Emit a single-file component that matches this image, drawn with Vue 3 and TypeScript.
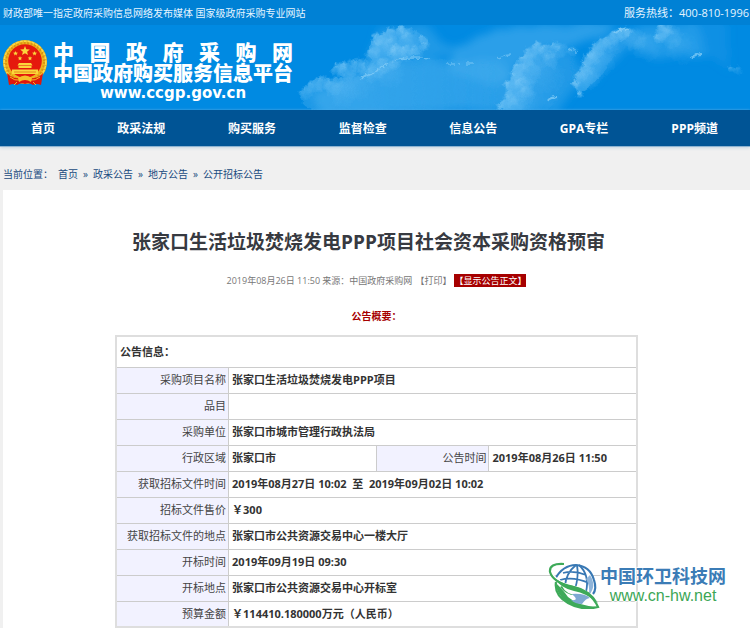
<script setup lang="ts">
interface Field {
  label: string
  value: string
}

interface Row {
  id: number
  fields: Field[]
}

// x, y, radius and opacity of one puff of cloud
type Puff = [number, number, number, number]

const siteName: string[] = ['中', '国', '政', '府', '采', '购', '网']
const navItems: string[] = ['首页', '政采法规', '购买服务', '监督检查', '信息公告', 'GPA专栏', 'PPP频道']
const crumbs: string[] = ['首页', '政采公告', '地方公告', '公开招标公告']

const puffs: Puff[] = [
  [9, 66, 7, 0.5], [17, 61, 8, 0.6], [26, 57, 8, 0.6], [36, 60, 10, 0.6], [46, 66, 15, 0.3],
  [42, 43, 8, 0.8], [50, 44, 10, 0.8], [61, 39, 8, 0.8], [70, 42, 9, 0.6], [80, 42, 10, 0.5],
  [76, 28, 8, 0.8], [80, 13, 7, 0.8], [88, 12, 8, 0.7], [95, 7, 7, 0.7], [84, 22, 12, 0.7],
  [96, 19, 11, 0.6], [106, 6, 7, 0.9], [112, 14, 10, 0.6], [100, 27, 10, 0.9], [110, 26, 9, 0.8],
  [119, 26, 8, 0.6], [126, 14, 5, 0.7], [128, 20, 5, 0.6], [87, 39, 9, 0.6], [97, 38, 7, 0.7],
  [75, 48, 9, 0.5], [60, 57, 18, 0.25], [92, 46, 16, 0.3],
  [206, 80, 7, 0.7], [214, 72, 9, 0.7], [212, 60, 7, 0.9], [220, 52, 9, 0.9], [226, 60, 12, 0.8],
  [222, 43, 7, 0.8], [229, 34, 8, 0.8], [232, 46, 13, 0.6], [229, 68, 10, 0.5], [233, 27, 7, 0.7],
  [241, 22, 7, 0.9], [249, 25, 9, 0.7], [258, 20, 6, 0.8], [264, 24, 8, 0.5], [254, 33, 9, 0.6],
  [240, 34, 11, 0.4], [275, 25, 6, 0.4], [220, 80, 12, 0.4], [250, 50, 18, 0.2],
  [279, 58, 5, 0.9], [283, 68, 4, 0.9], [283, 50, 7, 0.8], [290, 42, 8, 0.8], [294, 32, 8, 0.9],
  [300, 24, 8, 0.8], [306, 18, 8, 0.7], [313, 17, 9, 0.5], [319, 11, 8, 0.8], [326, 8, 7, 0.8],
  [331, 6, 6, 0.9], [337, 13, 12, 0.4], [302, 36, 16, 0.35], [292, 52, 12, 0.4],
  [362, 12, 6, 0.9], [367, 4, 9, 0.9], [374, 10, 12, 0.5], [350, 20, 15, 0.3], [385, 22, 16, 0.25],
  [434, 43, 4, 0.6], [441, 44, 5, 0.4],
]

const rows: Row[] = [
  { id: 1, fields: [{ label: '采购项目名称', value: '张家口生活垃圾焚烧发电PPP项目' }] },
  { id: 2, fields: [{ label: '品目', value: '' }] },
  { id: 3, fields: [{ label: '采购单位', value: '张家口市城市管理行政执法局' }] },
  {
    id: 4,
    fields: [
      { label: '行政区域', value: '张家口市' },
      { label: '公告时间', value: '2019年08月26日 11:50' },
    ],
  },
  { id: 5, fields: [{ label: '获取招标文件时间', value: '2019年08月27日 10:02  至  2019年09月02日 10:02' }] },
  { id: 6, fields: [{ label: '招标文件售价', value: '￥300' }] },
  { id: 7, fields: [{ label: '获取招标文件的地点', value: '张家口市公共资源交易中心一楼大厅' }] },
  { id: 8, fields: [{ label: '开标时间', value: '2019年09月19日 09:30' }] },
  { id: 9, fields: [{ label: '开标地点', value: '张家口市公共资源交易中心开标室' }] },
  { id: 10, fields: [{ label: '预算金额', value: '￥114410.180000万元（人民币）' }] },
]
</script>

<template>
  <div class="page">
    <header>
      <div class="topbar">
        <span>财政部唯一指定政府采购信息网络发布媒体 国家级政府采购专业网站</span>
        <span class="hotline">服务热线：400-810-1996</span>
      </div>

      <div class="banner">
        <svg class="emblem" viewBox="0 0 46 48" aria-hidden="true">
          <circle cx="23" cy="23" r="22" fill="#f0b41e" />
          <circle cx="23" cy="23" r="19.5" fill="none" stroke="#d99512" stroke-width="3" stroke-dasharray="2 1.6" />
          <circle cx="23" cy="23" r="20.8" fill="none" stroke="#fbd94a" stroke-width="1.5" stroke-dasharray="3 1" />
          <circle cx="23" cy="22" r="16.8" fill="#e5190d" />
          <g fill="#fbd63c">
            <path d="M23 7 l1.3 3.3 3.5.2 -2.7 2.2 .9 3.4 -3-1.9 -3 1.9 .9-3.4 -2.7-2.2 3.5-.2z" />
            <path d="M13.5 12 l.7 1.6 1.8.1 -1.4 1.2 .5 1.7 -1.6-1 -1.5 1 .5-1.7 -1.4-1.2 1.8-.1z" />
            <path d="M32.5 12 l.7 1.6 1.8.1 -1.4 1.2 .5 1.7 -1.6-1 -1.5 1 .5-1.7 -1.4-1.2 1.8-.1z" />
            <path d="M18 17 l.6 1.5 1.7.1 -1.3 1.1 .4 1.6 -1.4-.9 -1.4.9 .4-1.6 -1.3-1.1 1.7-.1z" />
            <path d="M28 17 l.6 1.5 1.7.1 -1.3 1.1 .4 1.6 -1.4-.9 -1.4.9 .4-1.6 -1.3-1.1 1.7-.1z" />
            <path d="M17 24h12l1.5 2.5h-15z" />
            <path d="M16.5 27h13v2h-13z" />
            <path d="M10 30.5h26v4.5H10z" />
          </g>
          <path d="M12 33h22" stroke="#e58a18" stroke-width="1" />
          <path d="M5 34 Q12 42 23 38 Q34 42 41 34 L39 46 Q34 44 31 46 Q27 43 23 45 Q19 43 15 46 Q12 44 7 46Z" fill="#e0170c" />
          <path d="M16 39 Q23 34 30 39 L29 43 Q23 39 17 43Z" fill="#f6c02a" />
          <path d="M8 38 Q13 42 17 41M29 41 Q33 42 38 38M12 46l3-3M34 46l-3-3" stroke="#f7ba22" stroke-width="1" fill="none" />
        </svg>

        <div class="brand">
          <div class="brand-name">
            <span v-for="ch in siteName" :key="ch">{{ ch }}</span>
          </div>
          <div class="brand-sub">中国政府购买服务信息平台</div>
          <div class="brand-url">www.ccgp.gov.cn</div>
        </div>

        <svg class="clouds" viewBox="0 0 454 85" preserveAspectRatio="xMinYMid slice" aria-hidden="true">
          <defs>
            <filter id="fray" x="-5%" y="-10%" width="110%" height="120%">
              <feTurbulence type="fractalNoise" baseFrequency="0.18" numOctaves="3" seed="7" result="n" />
              <feDisplacementMap in="SourceGraphic" in2="n" scale="7" xChannelSelector="R" yChannelSelector="G" />
              <feGaussianBlur stdDeviation="0.5" />
            </filter>
            <filter id="soft" x="-20%" y="-30%" width="140%" height="160%">
              <feTurbulence type="fractalNoise" baseFrequency="0.05" numOctaves="3" seed="3" result="n" />
              <feDisplacementMap in="SourceGraphic" in2="n" scale="12" xChannelSelector="R" yChannelSelector="G" />
              <feGaussianBlur stdDeviation="4" />
            </filter>
            <radialGradient id="puff" cx="0.55" cy="0.6" r="0.6" fx="0.3" fy="0.25">
              <stop offset="0" stop-color="#8fd2f9" stop-opacity="0.7" />
              <stop offset="0.5" stop-color="#6fc2f5" stop-opacity="0.45" />
              <stop offset="1" stop-color="#4cb0f0" stop-opacity="0.02" />
            </radialGradient>
            <linearGradient id="bank" x1="0" y1="0" x2="1" y2="0">
              <stop offset="0" stop-color="#4fb3f0" stop-opacity="0.6" />
              <stop offset="0.6" stop-color="#3fa9ec" stop-opacity="0.45" />
              <stop offset="1" stop-color="#3fa9ec" stop-opacity="0" />
            </linearGradient>
            <linearGradient id="tower" x1="0" y1="0" x2="1" y2="0">
              <stop offset="0" stop-color="#5ab9f3" stop-opacity="0.7" />
              <stop offset="1" stop-color="#1d94e6" stop-opacity="0.05" />
            </linearGradient>
          </defs>

          <g filter="url(#soft)">
            <path d="M12 72 L80 38 L205 36 L228 85 L30 90Z" fill="#4ab0ef" opacity="0.55" />
            <path d="M82 4 L130 0 L165 30 L130 36 L74 36Z" fill="#3ca8ec" opacity="0.5" />
            <path d="M160 24 L200 4 L320 -4 L304 14 L270 22 L235 26 L205 62 L150 44Z" fill="#42abec" opacity="0.65" />
            <path d="M230 26 L275 26 L290 50 L262 86 L212 86Z" fill="#3ca8ec" opacity="0.5" />
            <path d="M300 20 L330 4 L400 -4 L412 28 L360 32 L330 22 L296 56 L280 66Z" fill="#3ca8ec" opacity="0.55" />
            <path d="M395 -4 L430 -4 L436 44 L410 30Z" fill="#2a9ce8" opacity="0.35" />
          </g>

          <g filter="url(#fray)">
            <path d="M3 70 Q6 62 14 58 Q22 52 34 54 Q50 54 64 53 Q86 42 106 35 Q150 34 204 36 L206 66 L200 86 L22 86 Q6 82 3 70Z" fill="url(#bank)" opacity="0.6" />
            <path d="M74 36 Q70 24 76 18 Q74 8 84 10 Q92 2 100 6 Q104 -2 112 3 Q128 8 132 18 Q128 30 104 34 Q84 38 74 36Z" fill="#49aef0" opacity="0.4" />
            <path d="M204 82 Q208 74 212 68 Q206 58 216 52 Q218 34 230 28 Q240 16 262 20 Q276 22 284 34 Q270 70 250 86 L206 88Z" fill="url(#tower)" />
            <path d="M281 70 Q274 56 286 46 Q288 28 300 22 Q314 8 334 4 Q350 10 348 20 Q320 20 308 48 Q296 60 281 70Z" fill="url(#tower)" opacity="0.8" />
            <circle v-for="([x, y, r, o], i) in puffs" :key="i" :cx="x + 1" :cy="y + 1" :r="r" fill="url(#puff)" :opacity="o" />
            <path d="M64 54 Q82 46 92 38M100 34 Q118 32 134 34" stroke="#8fd2f9" stroke-width="1.5" fill="none" opacity="0.6" />
            <path d="M151 39h7M163 39h2M170 38h8M201 34q8-4 14-4M272 23q6 4 10 4" stroke="#8fd2f9" stroke-width="1.5" fill="none" opacity="0.5" />
            <path d="M251 76 Q255 72 261 72M318 9 Q326 3 334 4M394 32q8-3 13-3" stroke="#9bd8fa" stroke-width="2" fill="none" opacity="0.6" />
          </g>
        </svg>
      </div>

      <nav class="nav">
        <a v-for="item in navItems" :key="item" href="#">{{ item }}</a>
      </nav>
    </header>

    <div class="crumbs">
      <span>当前位置：</span>
      <template v-for="(crumb, i) in crumbs" :key="crumb">
        <span v-if="i > 0">»</span>
        <a href="#">{{ crumb }}</a>
      </template>
    </div>

    <main class="notice">
      <h1>张家口生活垃圾焚烧发电PPP项目社会资本采购资格预审</h1>
      <div class="meta">
        <span>2019年08月26日 11:50 来源：中国政府采购网</span>
        <button type="button" class="print">【打印】</button>
        <button type="button" class="toggle">【显示公告正文】</button>
      </div>
      <h2>公告概要：</h2>

      <table>
        <colgroup>
          <col class="col-label" />
          <col class="col-value" />
          <col class="col-label" />
          <col class="col-value" />
        </colgroup>
        <thead>
          <tr>
            <th colspan="4" scope="colgroup">公告信息：</th>
          </tr>
        </thead>
        <tbody>
          <tr v-for="row in rows" :key="row.id">
            <template v-for="field in row.fields" :key="field.label">
              <th scope="row">{{ field.label }}</th>
              <td :colspan="row.fields.length === 1 ? 3 : 1">{{ field.value }}</td>
            </template>
          </tr>
        </tbody>
      </table>

      <div class="watermark">
        <svg viewBox="0 0 52 48" aria-hidden="true">
          <circle cx="27" cy="24" r="20" fill="#ffffff" />
          <path d="M7 18 Q15 4 28 4 Q42 5 46 19 Q49 28 45 33" fill="none" stroke="#3878b4" stroke-width="2.2" />
          <path d="M12 19 Q25 15 41 22M15 12 Q26 9 38 14M10 25 Q24 23 38 31M28 4 Q18 12 17 25M29 4 Q31 15 27 28M31 4 Q42 14 38 31" fill="none" stroke="#3878b4" stroke-width="1.8" />
          <path d="M42 14 Q49 25 41 34 Q42 24 38 18Z" fill="#8fb4d9" />
          <path d="M4 14 Q12 24 26 26 Q42 30 50 46 Q34 50 21 42 Q6 34 7 21" fill="#ffffff" stroke="#ffffff" stroke-width="3" />
          <path d="M16 3 Q1 2 2 11 Q5 21 22 25 Q43 30 50 46 Q34 50 20 42 Q6 34 8 21" fill="none" stroke="#3eaa59" stroke-width="2.2" />
          <path d="M3 14 Q12 23 26 25 Q42 28 50 42 Q38 32 26 30 Q12 27 3 14Z" fill="#3eaa59" />
          <path d="M8 22 Q16 30 20 36 Q30 45 50 46 Q34 50 20 42 Q8 34 8 22Z" fill="#3eaa59" />
          <path d="M14 25 Q18 34 30 34 Q20 36 12 26Z" fill="#3eaa59" />
          <path d="M24 33 Q36 32 42 37 Q38 37 34 43 Q27 43 23 39 Q32 40 24 33Z" fill="#7ea9d2" />
        </svg>
        <div class="watermark-text">
          <strong>中国环卫科技网</strong>
          <span>www.cn-hw.net</span>
        </div>
      </div>
    </main>
  </div>
</template>

<style>
body {
  margin: 0;
  background: #f0f0f0;
}
</style>

<style scoped>
.page {
  font-family: "Open Sans", "Noto Sans CJK SC", sans-serif;
  font-size: 10px;
  line-height: 16px;
  color: #333;
}

a {
  color: inherit;
  text-decoration: none;
}

.topbar {
  display: flex;
  justify-content: space-between;
  align-items: center;
  height: 25px;
  padding: 0 1px 0 3px;
  background: #0081d5;
  color: #e6f5ff;
}

.hotline {
  font-size: 11px;
}

.banner {
  display: flex;
  height: 85px;
  overflow: hidden;
  background: #008ae2;
}

.emblem {
  flex: none;
  width: 46px;
  height: 48px;
  margin: 14px 5px 0 2px;
}

.brand {
  flex: none;
  width: 240px;
  padding-top: 16px;
  color: #fff;
  font-weight: 900;
}

.brand-name {
  display: flex;
  justify-content: space-between;
  font-size: 21px;
  line-height: 22px;
}

.brand-sub {
  font-size: 20px;
  line-height: 22px;
  white-space: nowrap;
}

.brand-url {
  font-family: "DejaVu Sans", sans-serif;
  font-size: 15px;
  font-weight: 700;
  line-height: 16px;
  text-align: center;
}

.clouds {
  flex: 1;
  min-width: 0;
  height: 85px;
  margin-left: 3px;
}

.nav {
  display: grid;
  grid-template-columns: 86px repeat(6, 1fr);
  height: 36px;
  background: #005495;
  border-bottom: 1px solid #8db3d1;
  box-shadow: 0 1px 3px #c5d5e2;
  color: #fff;
  font-size: 12px;
  font-weight: 700;
  line-height: 37px;
  text-align: center;
}

.crumbs {
  display: flex;
  gap: 5px;
  padding: 19px 3px 8px;
  color: #194b80;
}

.notice {
  position: relative;
  margin-left: 3px;
  padding: 37px 0 3px;
  background: #fff;
}

h1 {
  margin: 0;
  padding-right: 16px;
  color: #373a41;
  font-size: 19px;
  font-weight: 700;
  line-height: 30px;
  text-align: center;
}

.meta {
  display: flex;
  justify-content: center;
  align-items: center;
  gap: 3px;
  padding-top: 17px;
  color: #777;
  font-size: 9px;
  line-height: 13px;
}

.meta button {
  padding: 0;
  border: 0;
  background: none;
  color: inherit;
  font: inherit;
}

.meta .toggle {
  background: #a60000;
  color: #fff;
}

h2 {
  margin: 0;
  padding: 21px 0 11px;
  color: #a60000;
  font-size: 10px;
  font-weight: 700;
  line-height: 16px;
  text-align: center;
}

table {
  width: 70%;
  margin: 0 auto;
  table-layout: fixed;
  border-collapse: collapse;
  border: 2px solid #dedede;
  font-size: 11px;
}

.col-label {
  width: 21.6%;
}

.col-value {
  width: 28.4%;
}

th,
td {
  box-sizing: border-box;
  height: 26px;
  padding: 0 2px 0 3px;
  border: 1px solid #ccc;
  line-height: 16px;
}

td {
  font-weight: 700;
  white-space: pre-wrap;
}

tbody th {
  background: #f2f2ff;
  color: #444;
  font-weight: 400;
  text-align: right;
}

thead th {
  height: 31px;
  text-align: left;
}

.watermark {
  position: absolute;
  right: 24px;
  bottom: 22px;
  display: flex;
  align-items: center;
}

.watermark svg {
  width: 52px;
  height: 48px;
}

.watermark-text {
  display: flex;
  flex-direction: column;
  align-items: center;
  text-shadow: 1px 0 1px #fff, -1px 0 1px #fff, 0 1px 1px #fff, 0 -1px 1px #fff;
}

.watermark-text strong {
  color: #3b7cb6;
  font-size: 18px;
  line-height: 22px;
}

.watermark-text span {
  color: #3ba655;
  font-family: "Liberation Sans", sans-serif;
  font-size: 16px;
  line-height: 18px;
}
</style>
